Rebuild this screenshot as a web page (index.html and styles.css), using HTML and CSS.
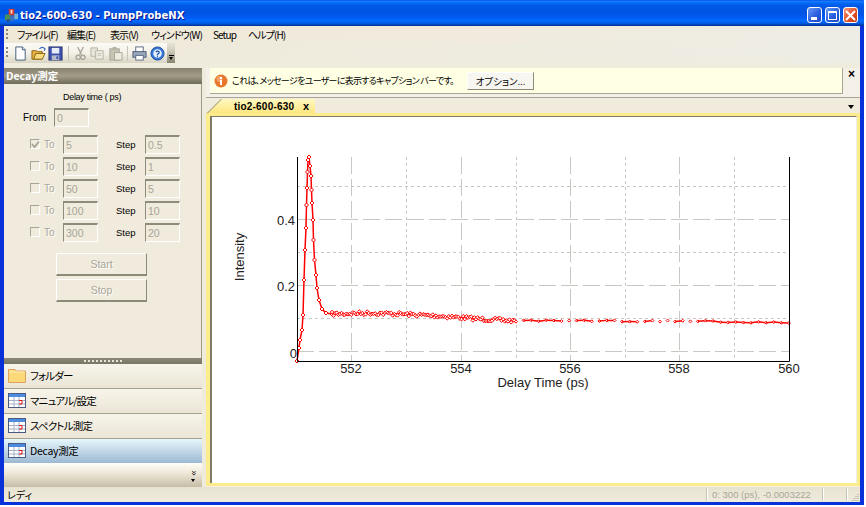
FILE: index.html
```html
<!DOCTYPE html>
<html lang="ja">
<head>
    <meta charset="UTF-8">
    <title>tio2-600-630 - PumpProbeNX</title>
    <link rel="stylesheet" href="styles.css">
</head>
<body>
    <div class="window">
        <div class="titlebar">
            <svg class="app-icon" viewBox="0 0 16 16" width="15" height="15">
                <rect x="5" y="1" width="6" height="7" fill="#d83a2a"/>
                <rect x="7" y="2" width="2" height="4" fill="#f6d8c8"/>
                <rect x="1" y="7" width="6" height="6" fill="#4a8f5a"/>
                <rect x="7" y="8" width="4" height="6" fill="#3c6fc0"/>
                <rect x="11" y="6" width="4" height="6" fill="#78b4d8"/>
                <rect x="3" y="12" width="3" height="3" fill="#2c4f7c"/>
            </svg>
            <span class="title-text">tio2-600-630 - PumpProbeNX</span>
            <div class="window-buttons">
                <div class="win-btn"><span class="min-mark"></span></div>
                <div class="win-btn"><span class="max-mark"></span></div>
                <div class="win-btn close">
                    <svg viewBox="0 0 11 11" width="11" height="11"><path d="M1 1 L10 10 M10 1 L1 10" stroke="#fff" stroke-width="2"/></svg>
                </div>
            </div>
        </div>

        <div class="inner">
            <div class="menubar">
                <span class="grip"></span>
                <span class="menu-item w-file">ファイル(F)</span>
                <span class="menu-item w-edit">編集(E)</span>
                <span class="menu-item w-view">表示(V)</span>
                <span class="menu-item w-win">ウィンドウ(W)</span>
                <span class="menu-item w-setup">Setup</span>
                <span class="menu-item">ヘルプ(H)</span>
            </div>

            <div class="toolbar-row">
                <div class="toolbar">
                    <span class="grip"></span>
                    <svg class="tool" viewBox="0 0 16 16"><path d="M3 1 H10 L13 4 V15 H3 Z" fill="#fff" stroke="#3f5a78"/><path d="M10 1 V4 H13" fill="#dde6f0" stroke="#3f5a78"/></svg>
                    <svg class="tool" viewBox="0 0 16 16"><path d="M1 5 H6 L7 6 H12 V14 H1 Z" fill="#e8b040" stroke="#8a6414"/><path d="M3 14 L5 8 H15 L12 14 Z" fill="#f8dc80" stroke="#8a6414"/><path d="M9 3 Q12 0 15 3 L14 5" fill="none" stroke="#3868b8" stroke-width="1.2"/></svg>
                    <svg class="tool" viewBox="0 0 16 16"><rect x="1" y="1" width="14" height="14" fill="#3c50b0" stroke="#28346c"/><rect x="4" y="2" width="8" height="6" fill="#e8ecf4"/><rect x="4" y="10" width="8" height="5" fill="#b8bcc8"/><rect x="9" y="11" width="2" height="3" fill="#3c50b0"/></svg>
                    <span class="tool-sep"></span>
                    <svg class="tool" viewBox="0 0 16 16"><path d="M5 1 L9 9 M11 1 L7 9" stroke="#a8a598" stroke-width="1.4" fill="none"/><circle cx="5.5" cy="12" r="2.3" fill="none" stroke="#a8a598" stroke-width="1.4"/><circle cx="10.5" cy="12" r="2.3" fill="none" stroke="#a8a598" stroke-width="1.4"/></svg>
                    <svg class="tool" viewBox="0 0 16 16"><path d="M1 2 H8 V11 H1 Z" fill="#e6e3d8" stroke="#b5b2a4"/><path d="M6 5 H14 V14 H6 Z" fill="#efece2" stroke="#b5b2a4"/><path d="M8 8 H12 M8 10 H12" stroke="#c4c1b4"/></svg>
                    <svg class="tool" viewBox="0 0 16 16"><rect x="2" y="3" width="10" height="12" fill="#c8c4b4" stroke="#a8a598"/><rect x="5" y="1" width="4" height="3" fill="#b5b2a4"/><path d="M7 7 H15 V15 H7 Z" fill="#efece2" stroke="#a8a598"/></svg>
                    <span class="tool-sep"></span>
                    <svg class="tool" viewBox="0 0 16 16"><rect x="4" y="1" width="8" height="6" fill="#fff" stroke="#5a6a84"/><rect x="1" y="6" width="14" height="6" fill="#9aa8bc" stroke="#4c5a74"/><rect x="4" y="10" width="8" height="5" fill="#fff" stroke="#5a6a84"/></svg>
                    <svg class="tool" viewBox="0 0 16 16"><circle cx="8" cy="8" r="7" fill="#3878d8" stroke="#1c4ca0"/><circle cx="8" cy="8" r="4.5" fill="#e4f0fc"/><path d="M6.2 6.6 Q8 4.6 9.8 6.4 Q10 8 8 8.8 V10 M8 11 V12" stroke="#1c4ca0" stroke-width="1.3" fill="none"/></svg>
                    <span class="overflow-handle"><i class="bar"></i><i class="down"></i></span>
                </div>
            </div>

            <div class="main">
                <aside class="pane">
                    <div class="pane-head">Decay測定</div>
                    <div class="pane-body">
                        <div class="delay-title">Delay time ( ps)</div>
                        <div class="from-row">
                            <label>From</label>
                            <input class="num" value="0" disabled>
                        </div>
                        <div class="range-row">
                            <span class="check on"><svg viewBox="0 0 9 9" width="9" height="9"><path d="M1 4 L3.5 7 L8 1.5" fill="none" stroke="#a8a598" stroke-width="1.8"/></svg></span>
                            <span class="to">To</span><input class="num" value="5" disabled>
                            <span class="step">Step</span><input class="num" value="0.5" disabled>
                        </div>
                        <div class="range-row">
                            <span class="check"></span>
                            <span class="to">To</span><input class="num" value="10" disabled>
                            <span class="step">Step</span><input class="num" value="1" disabled>
                        </div>
                        <div class="range-row">
                            <span class="check"></span>
                            <span class="to">To</span><input class="num" value="50" disabled>
                            <span class="step">Step</span><input class="num" value="5" disabled>
                        </div>
                        <div class="range-row">
                            <span class="check"></span>
                            <span class="to">To</span><input class="num" value="100" disabled>
                            <span class="step">Step</span><input class="num" value="10" disabled>
                        </div>
                        <div class="range-row">
                            <span class="check"></span>
                            <span class="to">To</span><input class="num" value="300" disabled>
                            <span class="step">Step</span><input class="num" value="20" disabled>
                        </div>
                        <button class="run-btn first" disabled>Start</button>
                        <button class="run-btn" disabled>Stop</button>
                    </div>
                    <div class="pane-split"><span></span></div>
                    <div class="nav-item">
                        <svg viewBox="0 0 18 15" width="18" height="15"><path d="M0.5 3 V1.5 H7 L8 3 H17.5 V14.5 H0.5 Z" fill="#fbd878" stroke="#e0a060"/><path d="M1.5 4 H16.5" stroke="#fff0b8"/></svg>
                        <span>フォルダー</span>
                    </div>
                    <div class="nav-item">
                        <svg viewBox="0 0 18 15" width="18" height="15"><use href="#cal"/></svg>
                        <span>マニュアル/設定</span>
                    </div>
                    <div class="nav-item">
                        <svg viewBox="0 0 18 15" width="18" height="15"><use href="#cal"/></svg>
                        <span>スペクトル測定</span>
                    </div>
                    <div class="nav-item active">
                        <svg viewBox="0 0 18 15" width="18" height="15">
                            <defs>
                                <g id="cal">
                                    <rect x="0.5" y="0.5" width="17" height="14" fill="#fff" stroke="#4a5a80"/>
                                    <rect x="1" y="1" width="16" height="3" fill="#4c8ce0"/>
                                    <path d="M1 7.5 H17 M1 11 H17 M6 4 V14 M11 4 V14" stroke="#a4b0c8"/>
                                    <path d="M11 7.5 H14 V11 H11" fill="none" stroke="#e01010"/>
                                </g>
                            </defs>
                            <use href="#cal"/>
                        </svg>
                        <span>Decay測定</span>
                    </div>
                    <div class="nav-foot">
                        <span class="foot-mark"><i>»</i><b></b></span>
                    </div>
                </aside>

                <div class="vsplit"></div>

                <section class="work">
                    <div class="caption-row">
                        <div class="caption">
                            <svg viewBox="0 0 14 14" width="14" height="14"><circle cx="7" cy="7" r="6.5" fill="#e8762c"/><circle cx="5.5" cy="5" r="3" fill="#f4a468"/><rect x="6" y="6" width="2" height="5" fill="#fff"/><rect x="6" y="3" width="2" height="2" fill="#fff"/></svg>
                            <span class="caption-text">これは、メッセージをユーザーに表示するキャプション バーです。</span>
                            <button class="caption-btn">オプション...</button>
                        </div>
                        <span class="caption-close">×</span>
                    </div>
                    <div class="tabstrip">
                        <svg class="tab-slant" viewBox="0 0 17 16" width="17" height="16"><path d="M1 15.5 L15.5 1" stroke="#8e8a78" fill="none"/></svg>
                        <div class="tab">
                            <span class="tab-name">tio2-600-630</span>
                            <span class="tab-x">x</span>
                        </div>
                        <span class="tab-menu"></span>
                    </div>
                    <div class="doc">
                        <div class="doc-inner">
                            <svg id="chart" class="chart" viewBox="212 117 644 365" width="644" height="365">
                                <g class="grid-major">
                                    <path d="M351.5 157 V361 M461.5 157 V361 M570.5 157 V361 M679.5 157 V361"/>
                                    <path d="M297 351.5 H789 M297 285.5 H789 M297 219.5 H789"/>
                                </g>
                                <g class="grid-minor">
                                    <path d="M406.5 157 V361 M516.5 157 V361 M625.5 157 V361 M734.5 157 V361"/>
                                    <path d="M297 318.5 H789 M297 252.5 H789 M297 186.5 H789"/>
                                </g>
                                <g id="series"></g>
                                <path class="axis" d="M297.5 157 V361.5 H789.5 V157"/>
                                <text class="tick" x="295" y="225" text-anchor="end">0.4</text>
                                <text class="tick" x="295" y="291" text-anchor="end">0.2</text>
                                <text class="tick" x="297" y="358" text-anchor="end">0</text>
                                <text class="tick" x="351" y="373" text-anchor="middle">552</text>
                                <text class="tick" x="461" y="373" text-anchor="middle">554</text>
                                <text class="tick" x="570" y="373" text-anchor="middle">556</text>
                                <text class="tick" x="679" y="373" text-anchor="middle">558</text>
                                <text class="tick" x="789" y="373" text-anchor="middle">560</text>
                                <text class="tick" x="543" y="387" text-anchor="middle">Delay Time (ps)</text>
                                <text class="tick" transform="translate(244 257) rotate(-90)" text-anchor="middle">Intensity</text>
                            </svg>
                        </div>
                    </div>
                </section>
            </div>

            <div class="statusbar">
                <span class="status-left">レディ</span>
                <span class="status-cell s-xy">0: 300 (ps), -0.0003222</span>
                <span class="status-cell s-b"></span>
                <span class="status-cell s-c"></span>
                <svg class="size-grip" viewBox="0 0 8 8" width="8" height="8"><path d="M7 1 V2 M5 3 V4 M7 3 V4 M3 5 V6 M5 5 V6 M7 5 V6 M1 7 V8 M3 7 V8 M5 7 V8 M7 7 V8" stroke="#a8a598"/></svg>
            </div>
        </div>
    </div>
    <script src="chart.js"></script>
</body>
</html>
```

FILE: styles.css
```css
* {
    box-sizing: border-box;
}
body {
    margin: 0;
    background: #fff;
    font-family: "Liberation Sans", "Noto Sans CJK JP", sans-serif;
    font-size: 10px;
    color: #000;
}
.window {
    width: 864px;
    height: 505px;
    display: flex;
    flex-direction: column;
    background: #0831d9;
}
.titlebar {
    height: 26px;
    flex: none;
    display: flex;
    align-items: center;
    padding: 4px 2px 0 4px;
    background: linear-gradient(180deg, #0058ee 0%, #1a7af8 6%, #036ffc 10%, #0262ee 16%, #0057e5 24%, #0054e3 50%, #005bf5 68%, #026afe 78%, #0062ef 86%, #0052d6 92%, #0040ab 96%, #003092 100%);
}
.app-icon {
    margin-right: 1px;
}
.title-text {
    color: #fff;
    font-family: "DejaVu Sans", sans-serif;
    font-size: 10px;
    font-weight: bold;
    text-shadow: 1px 1px #0f1089;
}
.window-buttons {
    margin-left: auto;
    display: flex;
    gap: 3px;
    margin-right: 4px;
}
.win-btn {
    width: 15px;
    height: 16px;
    border: 1px solid #fff;
    border-radius: 3px;
    background: linear-gradient(135deg, #6a9cf4 0%, #2a5fe0 55%, #1a48c8 100%);
    position: relative;
    display: flex;
    align-items: center;
    justify-content: center;
}
.win-btn.close {
    background: linear-gradient(135deg, #f09878 0%, #e2512a 55%, #c83c14 100%);
}
.min-mark {
    position: absolute;
    left: 3px;
    bottom: 2px;
    width: 6px;
    height: 3px;
    background: #fff;
}
.max-mark {
    width: 9px;
    height: 9px;
    border: 1px solid #fff;
    border-top-width: 2px;
}
.inner {
    flex: 1;
    min-height: 0;
    margin: 0 4px 3px 4px;
    display: flex;
    flex-direction: column;
    background: #efebdd;
}
.menubar {
    height: 17px;
    flex: none;
    display: flex;
    align-items: center;
    background: linear-gradient(90deg, #efe9d8 0%, #f0ebde 60%, #eeede5 100%);
}
.grip {
    width: 2px;
    height: 12px;
    margin: 0 9px 0 2px;
    background: repeating-linear-gradient(180deg, #8c8878 0 2px, transparent 2px 4px);
}
.menu-item {
    font-family: "Noto Sans CJK JP", sans-serif;
    font-size: 10px;
    line-height: 14px;
    font-feature-settings: "palt";
    letter-spacing: -0.9px;
    white-space: nowrap;
}
.w-file { width: 50px; }
.w-edit { width: 43px; }
.w-view { width: 41px; }
.w-win { width: 62px; }
.w-setup { width: 35px; }
.toolbar-row {
    height: 20px;
    flex: none;
    background: linear-gradient(90deg, #efe9d8 0%, #eeede5 100%);
}
.toolbar {
    width: 171px;
    height: 20px;
    display: flex;
    align-items: center;
    background: linear-gradient(180deg, #fbfaf5 0%, #f3f1e8 50%, #d9d5c5 100%);
}
.toolbar .grip {
    margin-right: 5px;
}
.tool {
    width: 15px;
    height: 15px;
    margin-right: 2.5px;
    flex: none;
}
.tool-sep {
    width: 1px;
    height: 15px;
    margin: 0 4px 0 2px;
    flex: none;
    background: #c8c4b4;
}
.overflow-handle {
    margin-left: auto;
    width: 8px;
    height: 20px;
    flex: none;
    display: flex;
    flex-direction: column;
    align-items: center;
    justify-content: flex-end;
    padding-bottom: 3px;
    gap: 1px;
    background: linear-gradient(180deg, #e6e3d6 0%, #d0ccbc 40%, #87836f 100%);
}
.overflow-handle .bar {
    width: 5px;
    height: 1px;
    background: #000;
}
.overflow-handle .down {
    width: 0;
    height: 0;
    border: 2.5px solid transparent;
    border-top: 3px solid #000;
    border-bottom: 0;
}
.main {
    flex: 1;
    min-height: 0;
    margin-top: 5px;
    display: flex;
}
.pane {
    width: 198px;
    flex: none;
    display: flex;
    flex-direction: column;
    background: #f0ebdc;
    box-shadow: inset -1px 0 #9c9888;
}
.pane-head {
    height: 16px;
    flex: none;
    padding-left: 2px;
    color: #fff;
    font-family: "Noto Sans CJK JP", sans-serif;
    font-size: 10.5px;
    line-height: 15px;
    font-weight: bold;
    background: linear-gradient(180deg, #87826f 0%, #a29c88 50%, #6f6b5a 100%);
}
.pane-body {
    height: 274px;
    flex: none;
    padding-left: 26px;
    display: flex;
    flex-direction: column;
    align-items: flex-start;
}
.delay-title {
    margin: 6px 0 0 33px;
    height: 13px;
    line-height: 15px;
    font-size: 9px;
    letter-spacing: -0.3px;
}
.from-row {
    margin: 5px 0 8px -7px;
    display: flex;
    align-items: center;
    height: 19px;
}
.from-row label {
    width: 31px;
    font-size: 10px;
}
.num {
    width: 35px;
    height: 19px;
    padding: 0 0 0 2px;
    border: 1px solid;
    border-color: #8f8b7a #fff #fff #8f8b7a;
    border-top-width: 2px;
    background: #f0ebdc;
    color: #a8a598;
    font-family: "Liberation Sans", sans-serif;
    font-size: 10.5px;
}
.range-row {
    display: flex;
    align-items: center;
    height: 18px;
    margin-bottom: 4px;
}
.check {
    width: 10px;
    height: 10px;
    border: 1px solid;
    border-color: #a8a598 #fff #fff #a8a598;
    margin-right: 4px;
    display: flex;
    align-items: center;
    justify-content: center;
}
.check svg {
    flex: none;
}
.to {
    width: 19px;
    font-size: 10px;
    color: #a8a598;
    text-shadow: 1px 1px #fff;
}
.step {
    width: 29px;
    margin-left: 18px;
    font-size: 9.5px;
}
.run-btn {
    width: 91px;
    height: 23px;
    margin: 0 0 3px 26px;
    border: 1px solid;
    border-color: #fff #8e8a78 #8e8a78 #fff;
    border-bottom-width: 2px;
    background: #f0ebdc;
    color: #a8a598;
    font-family: "Liberation Sans", sans-serif;
    font-size: 10.5px;
    text-shadow: 1px 1px #fff;
}
.run-btn.first {
    margin-top: 8px;
}
.pane-split {
    height: 6px;
    flex: none;
    display: flex;
    justify-content: center;
    align-items: center;
    background: linear-gradient(180deg, #8c8878, #7a7666);
}
.pane-split span {
    width: 38px;
    height: 2px;
    background: repeating-linear-gradient(90deg, #e8e4d8 0 2px, transparent 2px 4px);
}
.nav-item {
    height: 25px;
    flex: none;
    display: flex;
    align-items: center;
    gap: 4px;
    padding: 0 0 1px 4px;
    font-family: "Noto Sans CJK JP", sans-serif;
    font-size: 10.5px;
    font-feature-settings: "palt";
    letter-spacing: -0.8px;
    background: linear-gradient(180deg, #f7f4ea, #ebe5d6);
    border-bottom: 1px solid #a6a28f;
}
.nav-item.active {
    height: 24px;
    letter-spacing: -0.3px;
    border-bottom: 0;
    background: linear-gradient(180deg, #e6f6fb, #9db9d2);
}
.nav-foot {
    flex: 1;
    display: flex;
    justify-content: flex-end;
    align-items: center;
    padding-right: 6px;
    background: linear-gradient(180deg, #fffef8 0%, #efe9da 40%, #c6bda6 100%);
}
.foot-mark {
    display: flex;
    flex-direction: column;
    align-items: center;
}
.foot-mark i {
    font-style: normal;
    font-size: 9px;
    line-height: 8px;
    transform: rotate(90deg);
}
.foot-mark b {
    width: 0;
    height: 0;
    margin-top: 2px;
    border: 2.5px solid transparent;
    border-top: 3px solid #000;
    border-bottom: 0;
}
.vsplit {
    width: 4px;
    flex: none;
    background: #efebdd;
}
.work {
    flex: 1;
    min-width: 0;
    display: flex;
    flex-direction: column;
    background: #f4f0e8;
}
.caption-row {
    height: 29px;
    flex: none;
    display: flex;
    padding: 0 0 3px 4px;
}
.caption {
    width: 633px;
    height: 26px;
    display: flex;
    align-items: center;
    padding-left: 4px;
    background: #ffffe3;
    border-right: 1px solid #a8a598;
    border-bottom: 1px solid #a8a598;
}
.caption-text {
    margin-left: 4px;
    width: 235px;
    flex: none;
    font-family: "Noto Sans CJK JP", sans-serif;
    font-size: 9px;
    font-feature-settings: "palt";
    letter-spacing: -0.7px;
    white-space: nowrap;
}
.caption-btn {
    width: 67px;
    height: 18px;
    padding: 0;
    border: 1px solid;
    border-color: #fff #8e8a78 #8e8a78 #fff;
    background: #f8f6f0;
    font-family: "Noto Sans CJK JP", sans-serif;
    font-size: 9.5px;
    font-feature-settings: "palt";
}
.caption-close {
    width: 17px;
    text-align: center;
    font-size: 12px;
    line-height: 13px;
    font-weight: bold;
}
.tabstrip {
    height: 16px;
    flex: none;
    position: relative;
    display: flex;
    align-items: flex-end;
    background: #f0ebdc;
    border-top: 1px solid #a8a598;
}
.tab-slant {
    position: absolute;
    left: 0;
    top: 0;
    z-index: 1;
}
.tab {
    width: 108px;
    height: 14px;
    margin-left: 1px;
    padding-left: 27px;
    display: flex;
    align-items: center;
    font-family: "Liberation Sans", sans-serif;
    font-size: 10px;
    font-weight: bold;
    background: linear-gradient(180deg, #fff8c0, #ffe680);
    clip-path: polygon(0 100%, 14px 0, 100% 0, 100% 100%);
}
.tab-name {
    letter-spacing: 0.2px;
    width: 69px;
}
.tab-x {
    font-size: 11px;
}
.tab-menu {
    position: absolute;
    right: 6px;
    top: 7px;
    width: 0;
    height: 0;
    border: 3px solid transparent;
    border-top: 4px solid #000;
    border-bottom: 0;
}
.doc {
    flex: 1;
    min-height: 0;
    padding: 3px 3px 3px 4px;
    background: #fdec8a;
    margin-bottom: 1px;
}
.doc-inner {
    height: 100%;
    background: #fff;
    border: solid #7e7a68;
    border-width: 1px 1px 0 2px;
    border-right-color: #eee;
    overflow: hidden;
}
.chart {
    display: block;
}
.grid-major path {
    fill: none;
    stroke: #cac6c2;
    stroke-width: 1;
    stroke-dasharray: 17 5;
}
.grid-minor path {
    fill: none;
    stroke: #cac6c2;
    stroke-width: 1;
    stroke-dasharray: 3 3;
}
.axis {
    fill: none;
    stroke: #000;
    stroke-width: 1;
}
.tick {
    font-family: "Liberation Sans", sans-serif;
    font-size: 13px;
    fill: #222;
}
.series-line {
    fill: none;
    stroke: #f00;
    stroke-width: 1.5;
}
.series-mark {
    fill: #fff;
    stroke: #f00;
    stroke-width: 1;
}
.statusbar {
    height: 15px;
    flex: none;
    display: flex;
    align-items: center;
    position: relative;
    background: linear-gradient(180deg, #e7e2d0, #f0ecde);
}
.status-left {
    margin-left: 3px;
    width: 700px;
    font-family: "Noto Sans CJK JP", sans-serif;
    font-size: 10px;
    font-feature-settings: "palt";
}
.status-cell {
    height: 13px;
    line-height: 13px;
    padding-left: 4px;
    border-left: 1px solid #fff;
    box-shadow: -1px 0 #c8c4b4;
    color: #a8a598;
    font-size: 9.5px;
    white-space: nowrap;
}
.s-xy { width: 116px; }
.s-b { width: 24px; }
.s-c { width: 13px; }
.size-grip {
    position: absolute;
    right: 1px;
    bottom: 1px;
}
```

FILE: chart.js
```js
// draws the decay trace into the chart svg, page coordinates
const NS = 'http://www.w3.org/2000/svg';
const series = document.getElementById('series');

// small repeatable noise so the trace looks the same on each load
let seed = 7;
function noise() {
    seed = (seed * 16807) % 2147483647;
    return seed / 2147483647 - 0.5;
}

const peak = [[297, 361], [299, 348], [300, 340], [302, 330], [303, 315], [304, 280], [305, 250],
    [306, 228], [306.5, 205], [307, 188], [307.5, 172], [308, 160], [309, 157], [310, 166], [311, 176],
    [311.5, 190], [312, 203], [313, 220], [313.5, 240], [314.5, 260], [316, 275], [317, 288],
    [319, 300], [322, 309], [326, 313], [332, 314]];

const flat = [[332, 314], [370, 313], [400, 314], [440, 316], [480, 319], [515, 321], [700, 321], [789, 323]];

function flatY(x) {
    for (let i = 1; i < flat.length; i++) {
        if (x <= flat[i][0]) {
            const a = flat[i - 1], b = flat[i];
            return a[1] + (b[1] - a[1]) * (x - a[0]) / (b[0] - a[0]);
        }
    }
    return 323;
}

function mark(x, y, r) {
    const d = document.createElementNS(NS, 'path');
    d.setAttribute('class', 'series-mark');
    d.setAttribute('d', `M${x - r} ${y} L${x} ${y - r} L${x + r} ${y} L${x} ${y + r} Z`);
    series.appendChild(d);
}

function line(points) {
    const p = document.createElementNS(NS, 'polyline');
    p.setAttribute('class', 'series-line');
    p.setAttribute('points', points.map(pt => pt.join(',')).join(' '));
    series.appendChild(p);
}

// steep part
line(peak);
peak.forEach(pt => mark(pt[0], pt[1], 2));

// dense band up to 555 ps
const band = [];
for (let x = 332; x < 516; x += 1.6) {
    band.push([x, flatY(x) + noise() * 4]);
}
line(band);
band.forEach(pt => mark(pt[0], pt[1], 1.8));

// sparse tail
let prev = null;
for (let x = 516; x <= 789; x += 7.58) {
    const y = flatY(x) + noise() * 1.6;
    if (prev && (x > 705 || noise() > 0.1)) {
        line([prev, [x, y]]);
    }
    mark(x, y, 1.5);
    prev = [x, y];
}
```
